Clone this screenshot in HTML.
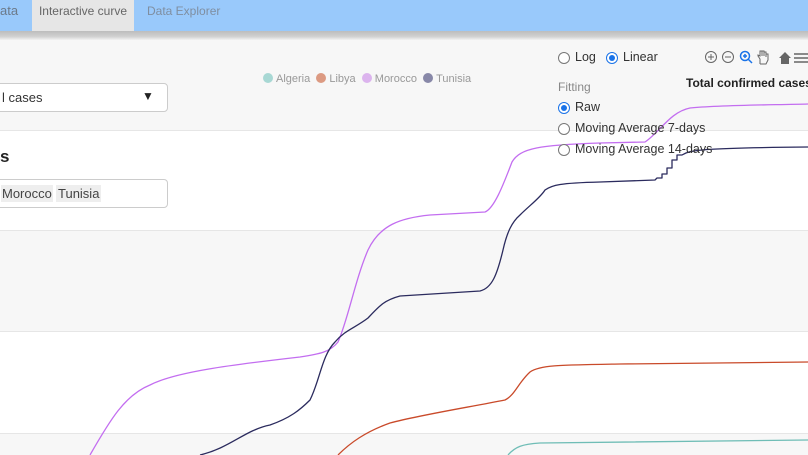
<!DOCTYPE html>
<html><head><meta charset="utf-8"><style>
body{margin:0;width:808px;height:455px;overflow:hidden;font-family:"Liberation Sans",Arial,sans-serif;background:#f7f7f7;position:relative}
.abs{position:absolute}
.nav{left:0;top:0;width:808px;height:31px;background:#99c9fb}
.shadow{left:0;top:31px;width:808px;height:9px;background:linear-gradient(#bdbdbd,#d0d0d0 60%,#f2f2f2)}
.tab{top:0;height:31px;line-height:22px;font-size:12px;color:#7f8ea0}
.band{left:0;width:808px}
.sel{background:#fff;border:1px solid #ccc;border-radius:4px}
.radio{width:10px;height:10px;border:1px solid #777;border-radius:50%;background:#fff}
.radio.on{border:1px solid #1a73e8;}
.radio.on::after{content:"";position:absolute;left:2px;top:2px;width:6px;height:6px;border-radius:50%;background:#1a73e8}
.lbl{font-size:12.5px;color:#333}
.dot{width:10px;height:10px;border-radius:50%;display:inline-block;vertical-align:-1px;margin-right:3px}
</style></head><body>
<div class="abs band" style="top:130px;height:100px;background:#fff;border-top:1px solid #e6e6e6"></div>
<div class="abs band" style="top:331px;height:101px;background:#fff;border-top:1px solid #e6e6e6;border-bottom:1px solid #e6e6e6"></div>
<div class="abs band" style="top:230px;height:1px;background:#e6e6e6"></div>
<div class="abs nav"></div>
<div class="abs tab" style="left:0;color:#6c7a8a;font-size:13px">ata</div>
<div class="abs tab" style="left:32px;width:102px;background:#e6e6e6;text-align:center;color:#666">Interactive curve</div>
<div class="abs tab" style="left:147px">Data Explorer</div>
<div class="abs shadow"></div>

<div class="abs sel" style="left:-5px;top:83px;width:171px;height:27px"><span class="abs" style="left:6px;top:6px;font-size:13px;color:#333">l cases</span><span class="abs" style="left:146px;top:5px;font-size:12px;color:#222">▼</span></div>
<div class="abs" style="left:0;top:147px;font-size:17px;font-weight:bold;color:#222">s</div>
<div class="abs sel" style="left:-5px;top:179px;width:171px;height:27px"><span class="abs" style="left:5px;top:5px;font-size:13px;color:#444;background:#eee;padding:1px 1px">Morocco</span><span class="abs" style="left:60px;top:5px;font-size:13px;color:#444;background:#eee;padding:1px 2px">Tunisia</span></div>

<div class="abs" style="left:263px;top:73px;font-size:11px;color:#999;white-space:nowrap">
<span class="dot" style="background:#a8d8d4"></span>Algeria&nbsp;&nbsp;<span class="dot" style="background:#dc9a82"></span>Libya&nbsp;&nbsp;<span class="dot" style="background:#dcb4ee"></span>Morocco&nbsp;&nbsp;<span class="dot" style="background:#8888a8"></span>Tunisia</div>

<svg class="abs" style="left:0;top:0" width="808" height="455" fill="none" stroke-width="1.3" stroke-linejoin="round">
<path stroke="#c36ef0" d="M90,455 C110,420 125,395 150,385 C175,372 230,365 300,357 C320,354 330,352 338,342 C348,320 355,280 368,250 C380,225 400,218 430,215 L485,212 C495,208 505,180 512,162 C520,148 540,145 600,143 L645,142 C660,132 670,112 690,108 C720,105 770,105 808,104"/>
<path stroke="#2b2b5e" d="M200,455 C230,448 245,430 270,425 C290,418 300,410 310,400 C320,380 322,355 335,342 C345,330 355,328 368,318 C380,305 385,300 400,296 L480,291 C492,288 497,275 503,250 C507,232 512,222 520,215 C530,205 540,198 545,190 C552,185 560,183 600,182 L655,180 L657,178 L662,178 L662,174 L667,174 L667,168 L672,168 L672,160 L677,160 L677,155 L682,155 C690,150 700,148 808,147"/>
<path stroke="#c94a2a" d="M338,455 C350,443 365,432 390,423 C420,415 470,407 505,400 C515,395 518,383 530,372 C540,365 560,365 620,364 L808,362"/>
<path stroke="#6fbdb6" d="M508,455 C515,447 522,444 540,443 L808,440"/>
</svg>

<div class="abs radio" style="left:558px;top:52px"></div><div class="abs lbl" style="left:575px;top:50px">Log</div>
<div class="abs radio on" style="left:606px;top:52px"></div><div class="abs lbl" style="left:623px;top:50px">Linear</div>
<div class="abs" style="left:558px;top:80px;font-size:12px;color:#888">Fitting</div>
<div class="abs radio on" style="left:558px;top:102px"></div><div class="abs lbl" style="left:575px;top:100px">Raw</div>
<div class="abs radio" style="left:558px;top:123px"></div><div class="abs lbl" style="left:575px;top:121px">Moving Average 7-days</div>
<div class="abs radio" style="left:558px;top:144px"></div><div class="abs lbl" style="left:575px;top:142px">Moving Average 14-days</div>
<div class="abs" style="left:686px;top:76px;font-size:12px;font-weight:bold;color:#222;white-space:nowrap">Total confirmed cases</div>

<svg class="abs" style="left:704px;top:50px" width="104" height="16" fill="none" stroke="#666" stroke-width="1">
<circle cx="7" cy="7" r="5.5"/><path d="M4,7h6M7,4v6"/>
<circle cx="24" cy="7" r="5.5"/><path d="M21,7h6"/>
<circle cx="41" cy="6" r="4.5" stroke="#1a73e8" stroke-width="1.5"/><path d="M44,9l4,4M39,6h4M41,4v4" stroke="#1a73e8" stroke-width="1.5"/>
<path d="M56,14v-5l-2,-3v-1l2,1v-5h2v5 M58,6v-5h2v5 M60,6v-4h2v5 M62,7v-3h2v6l-2,4h-6"/>
<path d="M75,8l6,-6l6,6h-2v6h-8v-6z" fill="#666" stroke="none"/>
<path d="M90,4h14M90,8h14M90,12h14" stroke-width="1.5"/>
</svg>
</body></html>
